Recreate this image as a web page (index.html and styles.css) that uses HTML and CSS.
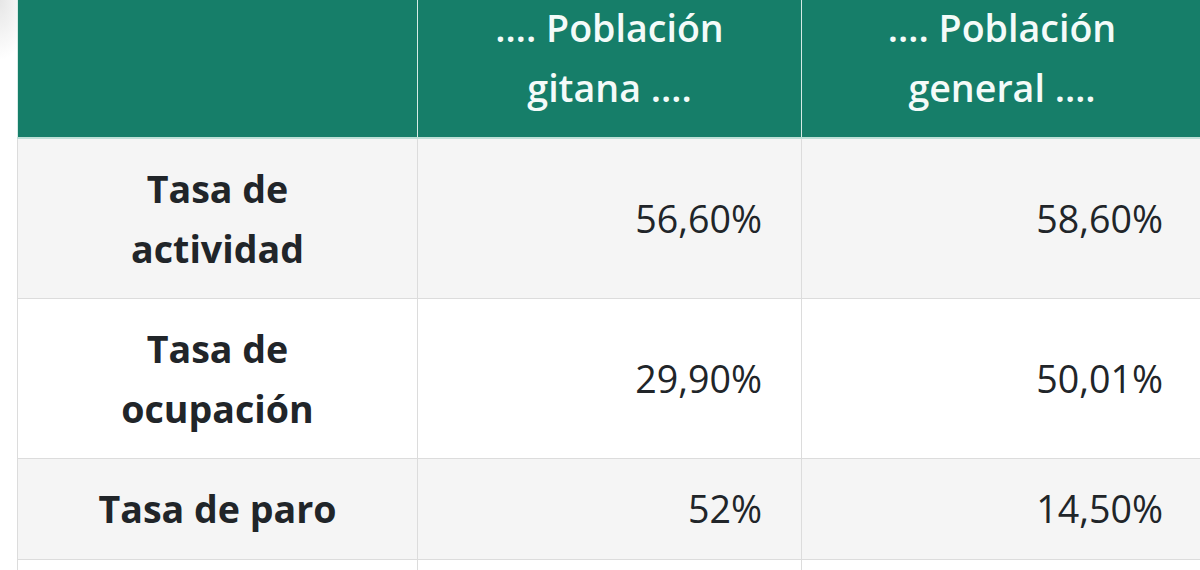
FILE: index.html
```html
<!DOCTYPE html>
<html lang="es">
<head>
<meta charset="utf-8">
<title>Tabla</title>
<link rel="stylesheet" href="styles.css">
</head>
<body>
<div class="page">
  <table class="data">
    <colgroup>
      <col class="c1">
      <col class="c2">
      <col class="c3">
    </colgroup>
    <thead>
      <tr>
        <th class="head"></th>
        <th class="head">…. Población gitana ….</th>
        <th class="head">…. Población general ….</th>
      </tr>
    </thead>
    <tbody>
      <tr class="odd">
        <th class="rowhead">Tasa de actividad</th>
        <td class="num">56,60%</td>
        <td class="num">58,60%</td>
      </tr>
      <tr class="even">
        <th class="rowhead">Tasa de ocupación</th>
        <td class="num">29,90%</td>
        <td class="num">50,01%</td>
      </tr>
      <tr class="odd">
        <th class="rowhead">Tasa de paro</th>
        <td class="num">52%</td>
        <td class="num">14,50%</td>
      </tr>
      <tr class="even">
        <th class="rowhead">&nbsp;</th>
        <td class="num">&nbsp;</td>
        <td class="num">&nbsp;</td>
      </tr>
    </tbody>
  </table>
</div>
</body>
</html>
```

FILE: styles.css
```css
html, body {
  margin: 0;
  padding: 0;
  background: #ffffff;
  overflow: hidden;
}

body {
  font-family: "Open Sans", "Liberation Sans", sans-serif;
  color: #212529;
  background: radial-gradient(ellipse 30px 60px at 0 0, #e6e6e6 0%, #ffffff 100%) no-repeat, #ffffff;
}

.page {
  padding-left: 17px;
}

.data {
  margin-top: -23px;
  border-collapse: collapse;
  table-layout: fixed;
  width: 1185px;
  font-size: 37.6px;
  line-height: 59.5px;
}

.c1 { width: 400px; }
.c2 { width: 384px; }
.c3 { width: 401px; }

.data th,
.data td {
  border: 1px solid #dcdcdc;
  padding: 20px 39px 20px 39px;
}

.head {
  background: #167e69;
  color: #f4fbf9;
  font-weight: 600;
  text-align: center;
  vertical-align: bottom;
  border-color: #d6ebe6 !important;
  border-top-color: #167e69 !important;
  border-bottom: 2px solid #bfe0d8 !important;
}

.data .rowhead {
  font-weight: 700;
  text-align: center;
  vertical-align: middle;
  color: #212529;
  padding-left: 50px;
  padding-right: 50px;
}

.num {
  text-align: right;
  vertical-align: middle;
  font-weight: 400;
}

.odd th,
.odd td {
  background: #f5f5f5;
}

.even th,
.even td {
  background: #ffffff;
}
```
